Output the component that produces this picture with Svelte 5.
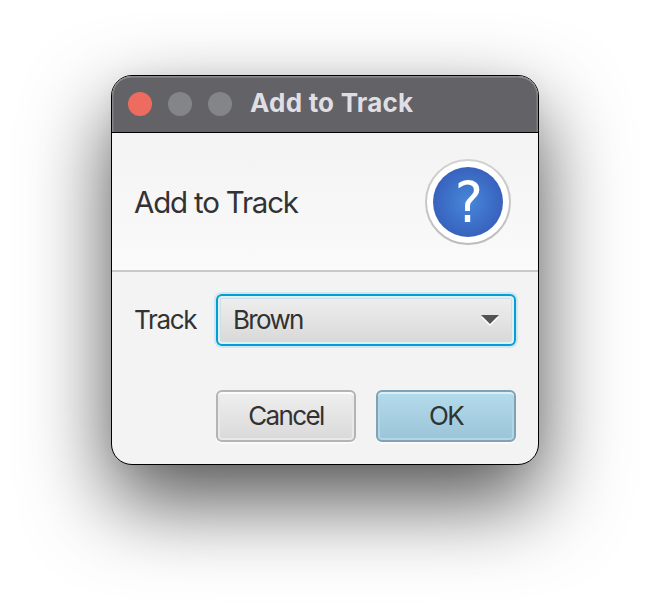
<script>
  const title = 'Add to Track';
  const lights = ['close', 'idle', 'idle'];
  let track = 'Brown';
</script>

<main>
  <section class="window">
    <header class="titlebar">
      {#each lights as light}
        <span class="light {light}"></span>
      {/each}
      <span class="title">{title}</span>
    </header>
    <div class="banner">
      <span class="heading">{title}</span>
      <svg class="question" width="86" height="86" viewBox="0 0 86 86">
        <defs>
          <radialGradient id="disc">
            <stop offset="0" stop-color="#4788da" />
            <stop offset="1" stop-color="#3862bd" />
          </radialGradient>
          <linearGradient id="ring" x1="0" y1="0" x2="0" y2="1">
            <stop offset="0" stop-color="#d2d2d2" />
            <stop offset="1" stop-color="#bcbcbc" />
          </linearGradient>
        </defs>
        <circle cx="43" cy="43" r="42" fill="#fff" stroke="url(#ring)" stroke-width="2" />
        <circle cx="43" cy="43" r="35" fill="url(#disc)" />
        <text transform="translate(43.9 64) scale(0.94 1)" text-anchor="middle">?</text>
      </svg>
    </div>
    <div class="content">
      <div class="field">
        <span class="label">Track</span>
        <div class="combo">
          <span class="value">{track}</span>
          <svg width="18" height="11" viewBox="0 0 18 11">
            <path d="M0 2h18l-9 9z" fill="#fff" />
            <path d="M0 0h18l-9 9z" fill="#535353" />
          </svg>
        </div>
      </div>
      <div class="actions">
        <button class="cancel"><span>Cancel</span></button>
        <button class="ok"><span>OK</span></button>
      </div>
    </div>
  </section>
</main>

<style>
  :global(body) {
    background: #fff;
    overflow: hidden;
  }
  main {
    box-sizing: border-box;
    width: 650px;
    height: 612px;
    padding: 75px 111px;
    overflow: hidden;
    font-family: Inter, 'Liberation Sans', sans-serif;
    font-size: 26px;
    color: #323232;
  }
  .window {
    box-sizing: border-box;
    width: 428px;
    height: 390px;
    border: 1px solid #000;
    border-radius: 21px;
    background: #f3f3f3;
    display: flex;
    flex-direction: column;
    box-shadow: 0 36px 84px rgba(0, 0, 0, 0.68), 0 0 20px rgba(0, 0, 0, 0.04);
  }
  .titlebar {
    box-sizing: border-box;
    height: 57px;
    flex: none;
    display: flex;
    align-items: center;
    gap: 16px;
    padding-left: 16px;
    background: #636267;
    border-bottom: 1px solid #000;
    border-radius: 20px 20px 0 0;
    box-shadow: inset 0 2px 0 -0.5px #8d8c90, inset 1.5px 0 0 #838286, inset -1.5px 0 0 #838286;
  }
  .light {
    width: 24px;
    height: 24px;
    border-radius: 50%;
    background: #848589;
  }
  .close {
    background: #ed6b5f;
  }
  .title {
    font-weight: 700;
    color: #dfdee4;
    margin-left: 2px;
    letter-spacing: 0.22px;
    line-height: 30px;
    padding-bottom: 2px;
    white-space: nowrap;
  }
  .banner {
    box-sizing: border-box;
    height: 139px;
    flex: none;
    display: flex;
    align-items: center;
    justify-content: space-between;
    padding: 0 27px 0 22px;
    background: linear-gradient(#f3f3f3, #fafafa);
    border-bottom: 2px solid #c8c8c8;
  }
  .heading {
    font-size: 29.5px;
    letter-spacing: -1.2px;
    white-space: nowrap;
  }
  .question text {
    font-family: 'DejaVu Sans', sans-serif;
    font-size: 56.5px;
    fill: #fff;
  }
  .content {
    padding: 22px 22px 0 22px;
  }
  .field {
    display: flex;
    align-items: center;
    justify-content: space-between;
  }
  .label {
    letter-spacing: -1.35px;
    padding-bottom: 1px;
  }
  .combo {
    box-sizing: border-box;
    width: 300px;
    height: 52px;
    display: flex;
    align-items: center;
    justify-content: space-between;
    padding: 1px 15px 0;
    border: 2px solid #039ed3;
    border-radius: 6px;
    background: linear-gradient(#efefef, #d8d8d8);
    box-shadow: 0 0 0 2px #d0e7ef, inset 0 0 0 2px #e1eff3, inset 0 0 0 3px #cbdfe5;
  }
  .value {
    letter-spacing: -1.7px;
    padding-bottom: 2px;
  }
  .actions {
    display: flex;
    justify-content: flex-end;
    gap: 20px;
    margin-top: 44px;
  }
  button {
    box-sizing: border-box;
    width: 140px;
    height: 52px;
    padding: 0 0 2px;
    border: 2px solid #b4b4b4;
    border-radius: 6px;
    font: inherit;
    color: inherit;
    letter-spacing: -1.6px;
    background: linear-gradient(#efefef, #d9d9d9);
    box-shadow: 0 2px 0 #fafafa, inset 0 2px 0 #fcfcfc, inset 0 0 0 2px #e9e9e9;
  }
  .ok {
    border-color: #7fa3b5;
    background: linear-gradient(#b3dcec, #9cc4d8);
    box-shadow: 0 2px 0 #fafafa, inset 0 2px 0 #d8eff7, inset 0 0 0 2px #b2d6e5;
  }
</style>
